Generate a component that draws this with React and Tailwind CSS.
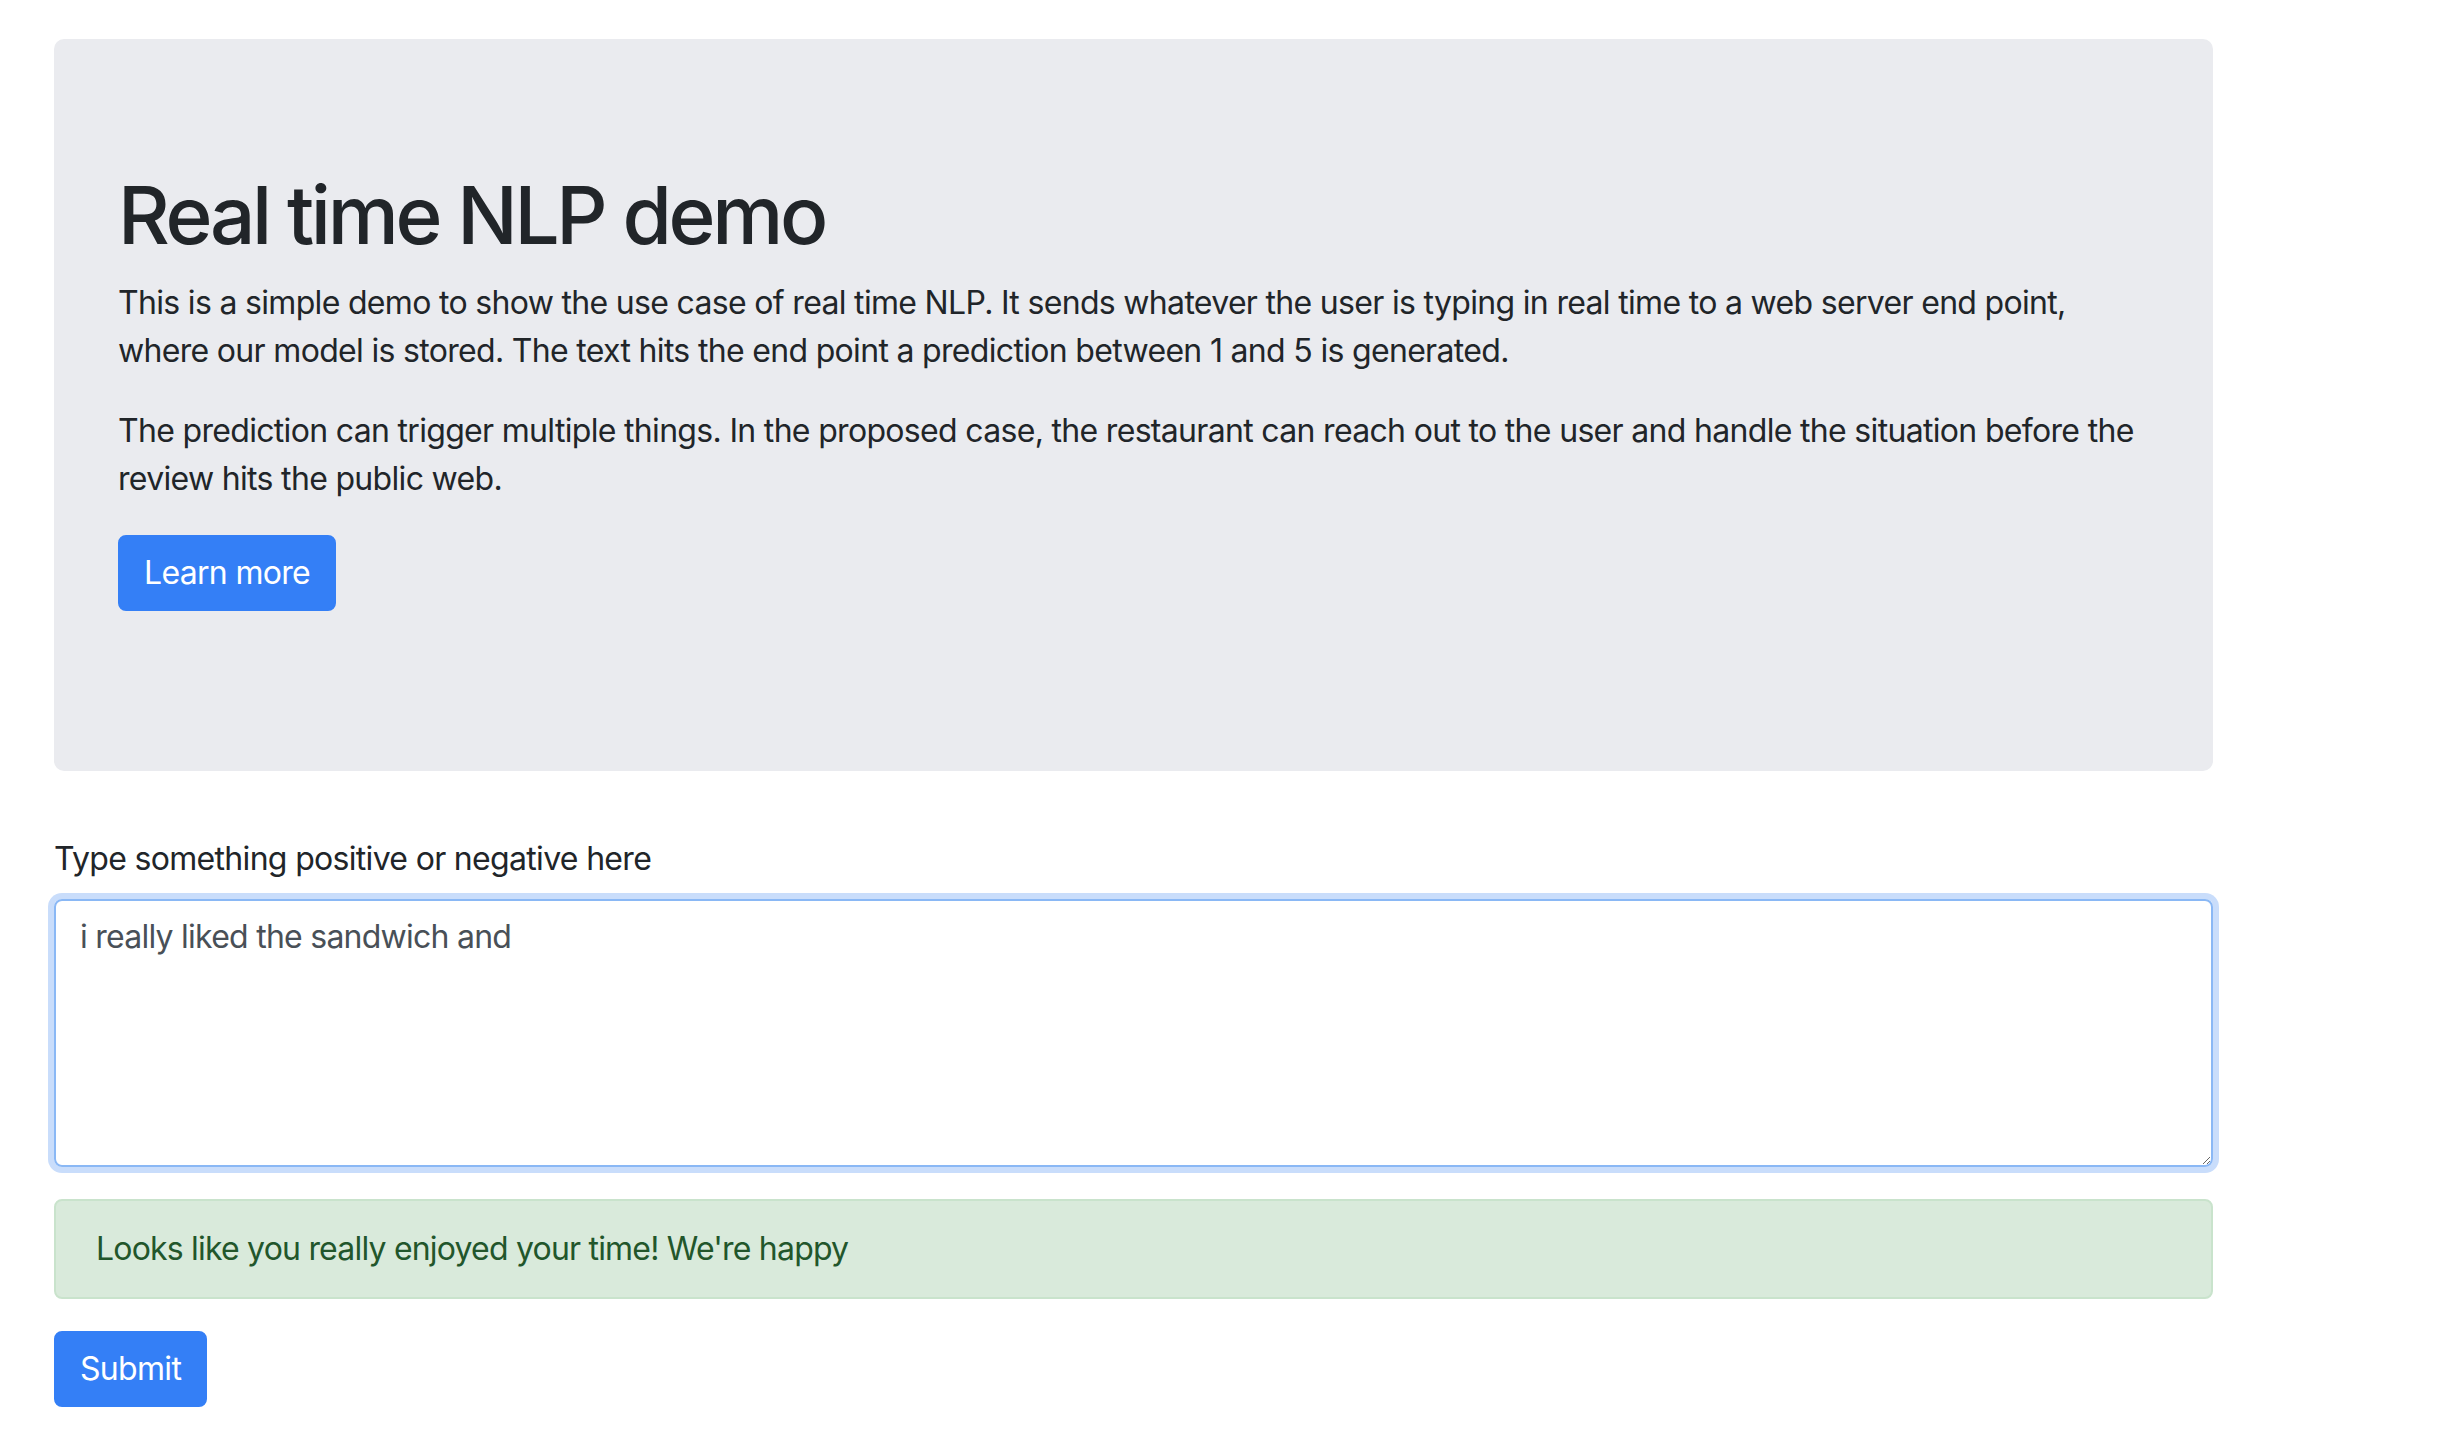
import { useState } from "react";

const FONT = "font-['Inter','Noto_Sans',sans-serif]";

function Jumbotron() {
  return (
    <div className="rounded-[10px] bg-[#eaebef] px-[64px] pt-[128px] pb-[128px]">
      <h1 className="mb-[16px] text-[80px] leading-[96px] font-medium tracking-[-3.3px] text-[#212529]">
        Real time NLP demo
      </h1>
      <p className="mb-[32px]">
        This is a simple demo to show the use case of real time NLP. It sends whatever the user is typing in real time to
        a web server end point, where our model is stored. The text hits the end point a prediction between 1 and 5 is
        generated.
      </p>
      <p className="mb-[32px]">
        The prediction can trigger multiple things. In the proposed case, the restaurant can reach out to the user and
        handle the situation before the review hits the public web.
      </p>
      <p className="mb-[32px]">
        <a
          href="#"
          className="inline-block rounded-[8px] border-2 border-[#347ff6] bg-[#347ff6] px-[24px] py-[12px] text-white"
        >
          Learn more
        </a>
      </p>
    </div>
  );
}

export default function App() {
  const [text, setText] = useState("i really liked the sandwich and");

  return (
    <div className={`min-h-screen bg-white ${FONT} text-[32px] leading-[48px] tracking-[-0.68px] text-[#212529]`}>
      <div className="ml-[54px] w-[2159px] pt-[39px]">
        <Jumbotron />

        <div className="mt-[64px]">
          <label className="mb-[16px] block">Type something positive or negative here</label>
          <textarea
            value={text}
            onChange={(e) => setText(e.target.value)}
            className="block h-[268px] w-full rounded-[8px] border-2 border-[#8ab8f5] px-[24px] py-[12px] tracking-[-0.75px] text-[#495057] shadow-[0_0_0_6px_#c9ddfb] outline-none"
          />
        </div>

        <div className="mt-[32px] rounded-[8px] border-2 border-[#c9e3cc] bg-[#d9eadb] px-[40px] py-[24px] tracking-[-0.8px] text-[#22562b]">
          Looks like you really enjoyed your time! We're happy
        </div>

        <button className="mt-[32px] rounded-[8px] border-2 border-[#347ff6] bg-[#347ff6] px-[24px] py-[12px] text-white">
          Submit
        </button>
      </div>
    </div>
  );
}
